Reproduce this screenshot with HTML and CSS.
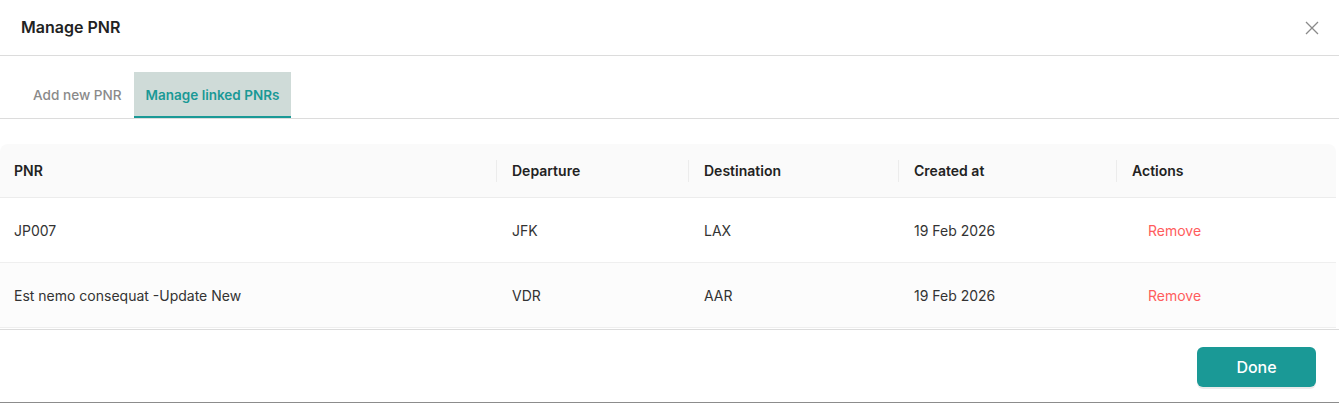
FILE: index.html
```html
<!DOCTYPE html>
<html>
<head>
<meta charset="utf-8">
<link rel="stylesheet" href="styles.css">
</head>
<body>
<div class="modal">
  <div class="modal-header">
    <div class="title">Manage PNR</div>
    <button class="close" aria-label="Close">
      <svg width="14" height="14" viewBox="0 0 14 14"><path d="M1 1L13 13M13 1L1 13" stroke="#8a8a8a" stroke-width="1.3" fill="none"/></svg>
    </button>
  </div>
  <div class="tabs">
    <div class="tab">Add new PNR</div>
    <div class="tab active">Manage linked PNRs</div>
  </div>
  <div class="body">
    <table class="table">
      <colgroup>
        <col class="c1"><col class="c2"><col class="c3"><col class="c4"><col class="c5">
      </colgroup>
      <thead>
        <tr>
          <th>PNR</th>
          <th class="sep">Departure</th>
          <th class="sep">Destination</th>
          <th class="sep">Created at</th>
          <th class="sep">Actions</th>
        </tr>
      </thead>
      <tbody>
        <tr>
          <td>JP007</td>
          <td>JFK</td>
          <td>LAX</td>
          <td>19 Feb 2026</td>
          <td><span class="remove">Remove</span></td>
        </tr>
        <tr class="hover">
          <td>Est nemo consequat -Update New</td>
          <td>VDR</td>
          <td>AAR</td>
          <td>19 Feb 2026</td>
          <td><span class="remove">Remove</span></td>
        </tr>
      </tbody>
    </table>
  </div>
  <div class="footer">
    <button class="done">Done</button>
  </div>
</div>
</body>
</html>
```
FILE: styles.css
```css
* { box-sizing: border-box; }
html, body { margin: 0; padding: 0; background: #fff; }
body {
  font-family: Inter, "Noto Sans", "Liberation Sans", sans-serif;
  color: #333;
  width: 1339px;
  height: 403px;
  overflow: hidden;
}
.modal {
  width: 1339px;
  height: 403px;
  display: flex;
  flex-direction: column;
  border-bottom: 1px solid #8c8c8c;
}
.modal-header {
  height: 56px;
  display: flex;
  align-items: center;
  justify-content: space-between;
  padding: 0 20px 0 21px;
  border-bottom: 1px solid #dcdcdc;
  flex-shrink: 0;
}
.title {
  font-size: 16px;
  font-weight: 600;
  color: #222;
  margin-top: -1px;
}
.close {
  border: 0;
  background: none;
  padding: 0;
  width: 14px;
  height: 14px;
  display: flex;
  cursor: pointer;
  margin-top: 1px;
}
.tabs {
  display: flex;
  padding: 16px 0 0 21px;
  border-bottom: 1px solid #dcdcdc;
  flex-shrink: 0;
}
.tab {
  height: 46px;
  padding: 0 12px;
  display: flex;
  align-items: center;
  font-size: 13.6px;
  font-weight: 500;
  color: #8a8a8a;
  border-bottom: 2px solid transparent;
  padding-top: 1px;
}
.tab.active {
  background: #cfdbd8;
  color: #1a9996;
  font-weight: 600;
  font-size: 13.5px;
  border-bottom-color: #1a9996;
}
.body {
  padding: 25px 3px 0 0;
  flex-shrink: 0;
}
.table {
  width: 1336px;
  border-collapse: separate;
  border-spacing: 0;
  table-layout: fixed;
  font-size: 14px;
}
.c1 { width: 496px; }
.c2 { width: 192px; }
.c3 { width: 210px; }
.c4 { width: 218px; }
.c5 { width: 220px; }
th {
  background: #fafafa;
  height: 54px;
  text-align: left;
  font-weight: 600;
  color: #222;
  padding: 0 16px 0 14px;
  border-bottom: 1px solid #ececec;
  position: relative;
}
th.sep { padding-left: 16px; }
th:first-child { border-top-left-radius: 8px; }
th:last-child { border-top-right-radius: 8px; }
th.sep::before {
  content: "";
  position: absolute;
  left: 0;
  top: 50%;
  width: 1px;
  height: 22px;
  margin-top: -11px;
  background: #ececec;
}
td {
  height: 65px;
  padding: 0 16px;
  border-bottom: 1px solid #efefef;
  color: #333;
  font-weight: 400;
}
td:first-child { padding-left: 14px; }
tr.hover td { background: #fcfcfc; }
.remove {
  color: #ff5c5c;
  padding-left: 16px;
}
.footer {
  margin-top: 1px;
  border-top: 1px solid #dcdcdc;
  display: flex;
  justify-content: flex-end;
  padding: 17px 23px 0 0;
  flex: 1;
}
.done {
  width: 119px;
  height: 40px;
  border: 0;
  border-radius: 6px;
  background: #1a9996;
  color: #fff;
  font-family: Inter, "Noto Sans", "Liberation Sans", sans-serif;
  font-size: 16px;
  font-weight: 500;
  box-shadow: 0 2px 0 rgba(0, 0, 0, 0.08);
  cursor: pointer;
}
```
